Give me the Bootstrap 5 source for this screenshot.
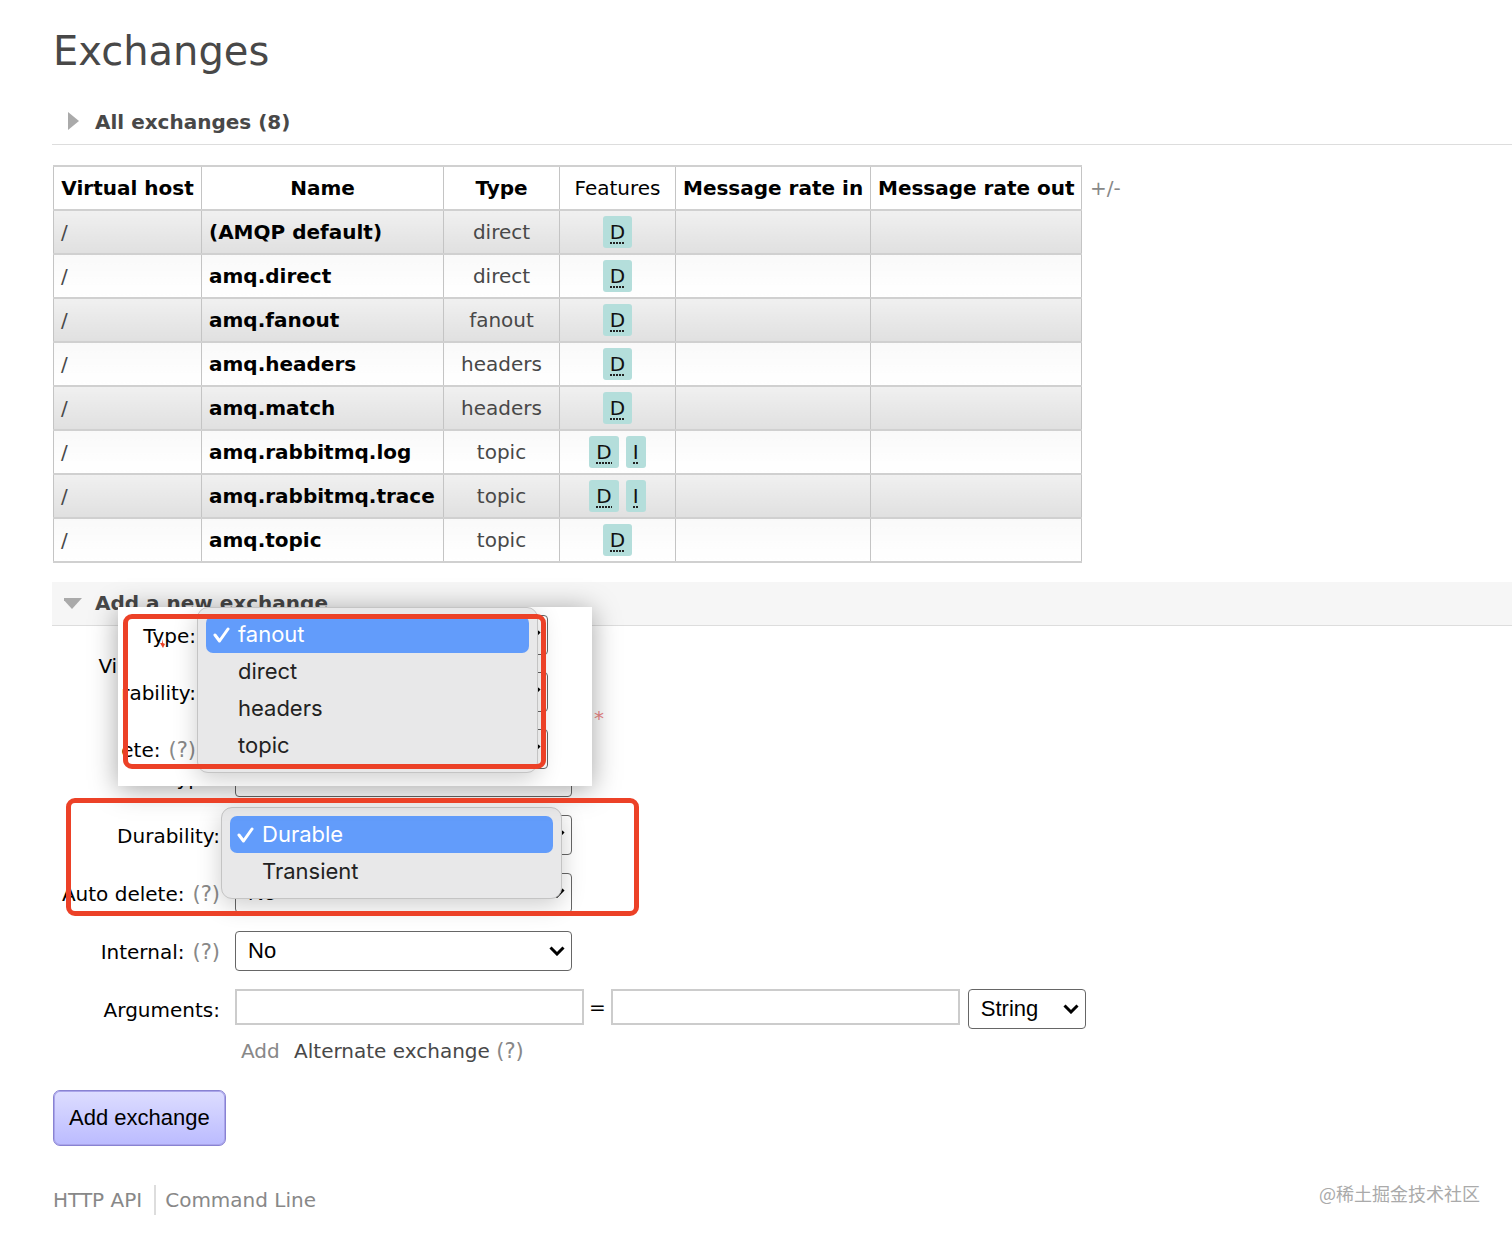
<!DOCTYPE html>
<html lang="en">
<head>
<meta charset="utf-8">
<meta name="viewport" content="width=device-width, initial-scale=1">
<title>Exchanges</title>
<link href="https://cdn.jsdelivr.net/npm/bootstrap@5.3.0/dist/css/bootstrap.min.css" rel="stylesheet">
<style>
  body { font: 20px/30px "DejaVu Sans", Verdana, sans-serif; color: #484848; background: #fff; }
  a, a:hover { color: #888; text-decoration: none; }
  .page { padding: 21px 0 16px 53px; }
  .page h1 { font-size: 40px; line-height: 60px; font-weight: 400; margin-bottom: 20px; }
  .section-head { font-size: 20px; line-height: 30px; font-weight: 700; padding: 6px 0 7px 12px; border-bottom: 1px solid #ddd; margin: 0 0 0 -1px; }
  .section-head.open { background: #f6f6f6; margin-top: 19px; }
  .section-head button { font: inherit; color: inherit; background: none; border: 0; padding: 0; }
  .section-head svg { width: 20px; height: 20px; fill: #aaa; margin-right: 11px; }

  .xtable { border-collapse: collapse; table-layout: fixed; width: 1028px; }
  .xtable th, .xtable td { height: 44px; border: 1px solid #c8c8c8; border-width: 2px 1px; border-color: #d0d0d0 #c4c4c4; padding: 0 7px; text-align: center; white-space: nowrap; line-height: 30px; }
  .xtable th { color: #000; }
  .xtable tbody tr:nth-child(odd) td { background: linear-gradient(#f0f0f0, #e0e0e0); }
  .xtable tbody tr:nth-child(even) td { background: linear-gradient(#f9f9f9, #fff); }
  .xtable td.start { text-align: left; }
  .xtable td a { color: #000; font-weight: 700; }
  .w-host { width: 148px; } .w-name { width: 242px; } .w-type { width: 116px; }
  .w-in { width: 195px; } .w-out { width: 211px; }
  .flag { display: inline-block; background: #b4dedb; color: #111; border-radius: 3px; padding: 1px 7px; line-height: 30px; }
  .flag + .flag { margin-left: 7px; }
  .flag abbr { display: block; text-decoration: none; background: repeating-linear-gradient(90deg, #222 0 2px, transparent 2px 3px) 0 25px / 100% 2px no-repeat; cursor: help; }

  .fields { padding-top: 19px; gap: 18px; }
  .fields label { color: #000; white-space: nowrap; }
  .lab { flex: 0 0 167px; min-width: 0; display: flex; justify-content: flex-end; gap: 8px; padding-top: 6px; }
  .fieldline { gap: 15px; }
  .hint { color: #888; font-size: 21px; }
  .pick { appearance: none; font: 22px/28px "Liberation Sans", Arial, sans-serif; color: #000; width: 337px; height: 40px; padding: 0 12px; border: 1px solid #666; border-radius: 4px;
    background: #fff url("data:image/svg+xml,%3Csvg xmlns='http://www.w3.org/2000/svg' width='16' height='10' viewBox='0 0 16 10'%3E%3Cpath d='M1.5 1.5 8 8l6.500-6.500' fill='none' stroke='%23000' stroke-width='3'/%3E%3C/svg%3E") no-repeat right 6px center; }
  .pick.short { width: 118px; }
  .entry { width: 349px; height: 36px; border: 2px solid #ccc; padding: 0 6px; background: #fff; }
  .equals { padding: 3px 5px 0; }
  .must { color: #ee8888; padding-left: 2px; }
  .extras { padding: 7px 0 0 6px; }

  .frame { position: absolute; border: 5px solid #ec4127; border-radius: 9px; pointer-events: none; z-index: 5; }
  .snippet { position: absolute; left: 65px; top: -19px; width: 474px; height: 179px; background: #fff; box-shadow: 0 3px 26px rgba(0,0,0,.36); z-index: 4; }
  .snippet .crop { position: absolute; inset: 0; overflow: hidden; padding-top: 8px; display: flex; flex-direction: column; gap: 17px; }
  .snippet .lab { flex-basis: 78px; }
  .snippet .menu { left: 79px; top: 0; }
  .snippet .frame { left: 5px; top: 7px; width: 423px; height: 155px; }
  .frame.lower { left: 13px; top: 172px; width: 573px; height: 118px; }
  .nick { position: absolute; left: 42px; top: 32px; width: 6px; height: 9px; fill: #ec4127; }
  .menu { position: absolute; width: 341px; padding: 8px; margin: 0; list-style: none; background: #e8e8e9; border: 1px solid #c4c4c4; border-radius: 11px; box-shadow: 0 6px 24px rgba(0,0,0,.2); z-index: 3; color: #222; font: 22px/37px Inter, sans-serif; }
  .menu li { height: 37px; padding-left: 32px; position: relative; }
  .menu li.on { background: #629cfb; color: #fff; border-radius: 7px; }
  .menu svg { position: absolute; left: 7px; top: 11px; width: 18px; height: 16px; fill: none; stroke: #fff; stroke-width: 3; stroke-linecap: round; stroke-linejoin: round; }
  .menu.lower { left: 168px; top: -8px; }

  .submit { font: 22px/32px "Liberation Sans", Arial, sans-serif; color: #000; padding: 11px 15px; border: 1px solid #8882d2; border-radius: 7px; background: linear-gradient(#ddddff, #bbbbff); box-shadow: inset 0 0 0 1px #aaa5ea; margin-top: 24px; }
  .foot { margin-top: 39px; padding-right: 32px; }
  .foot a { display: inline-block; }
  .foot a + a { border-left: 2px solid #ddd; margin-left: 12px; padding-left: 9px; }
  .credit { font: 18px/16px "Noto Sans CJK SC", sans-serif; color: #aaa; }
</style>
<script src="https://cdn.jsdelivr.net/npm/bootstrap@5.3.0/dist/js/bootstrap.bundle.min.js"></script>
</head>
<body>
<main class="page">
  <h1>Exchanges</h1>

  <h2 class="section-head"><button type="button" class="d-flex align-items-center"><svg viewBox="0 0 20 20"><path d="M4 0 15 9 4 18z"/></svg>All exchanges (8)</button></h2>

  <div class="d-flex align-items-start mt-1 pt-3">
    <table class="xtable flex-shrink-0">
      <colgroup><col class="w-host"><col class="w-name"><col class="w-type"><col class="w-type"><col class="w-in"><col class="w-out"></colgroup>
      <thead><tr><th>Virtual host</th><th>Name</th><th>Type</th><th class="fw-normal">Features</th><th>Message rate in</th><th>Message rate out</th></tr></thead>
      <tbody>
        <tr><td class="start">/</td><td class="start"><a href="#">(AMQP default)</a></td><td>direct</td><td><span class="flag"><abbr>D</abbr></span></td><td></td><td></td></tr>
        <tr><td class="start">/</td><td class="start"><a href="#">amq.direct</a></td><td>direct</td><td><span class="flag"><abbr>D</abbr></span></td><td></td><td></td></tr>
        <tr><td class="start">/</td><td class="start"><a href="#">amq.fanout</a></td><td>fanout</td><td><span class="flag"><abbr>D</abbr></span></td><td></td><td></td></tr>
        <tr><td class="start">/</td><td class="start"><a href="#">amq.headers</a></td><td>headers</td><td><span class="flag"><abbr>D</abbr></span></td><td></td><td></td></tr>
        <tr><td class="start">/</td><td class="start"><a href="#">amq.match</a></td><td>headers</td><td><span class="flag"><abbr>D</abbr></span></td><td></td><td></td></tr>
        <tr><td class="start">/</td><td class="start"><a href="#">amq.rabbitmq.log</a></td><td>topic</td><td><span class="flag"><abbr>D</abbr></span><span class="flag"><abbr>I</abbr></span></td><td></td><td></td></tr>
        <tr><td class="start">/</td><td class="start"><a href="#">amq.rabbitmq.trace</a></td><td>topic</td><td><span class="flag"><abbr>D</abbr></span><span class="flag"><abbr>I</abbr></span></td><td></td><td></td></tr>
        <tr><td class="start">/</td><td class="start"><a href="#">amq.topic</a></td><td>topic</td><td><span class="flag"><abbr>D</abbr></span></td><td></td><td></td></tr>
      </tbody>
    </table>
    <a href="#" class="pt-2 ms-2">+/-</a>
  </div>

  <h2 class="section-head open"><button type="button" class="d-flex align-items-center"><svg viewBox="0 0 20 20"><path d="M-2 5h20l-10 11z"/></svg>Add a new exchange</button></h2>

  <form>
    <div class="fields d-flex flex-column position-relative">
      <div class="fieldline d-flex"><label class="lab" for="vhost">Virtual host:</label><select id="vhost" class="pick"><option>/</option></select></div>
      <div class="fieldline d-flex"><label class="lab" for="name">Name:</label><div class="d-flex gap-2"><input id="name" class="entry" type="text"><span class="must">*</span></div></div>
      <div class="fieldline d-flex"><label class="lab" for="type">Type:</label><select id="type" class="pick"><option>fanout</option></select></div>
      <div class="fieldline d-flex position-relative"><label class="lab" for="durable">Durability:</label><select id="durable" class="pick"><option>Durable</option><option>Transient</option></select>
        <ul class="menu lower">
          <li class="on"><svg viewBox="0 0 18 16"><path d="m2 8 4.500 6L15 2"/></svg>Durable</li>
          <li>Transient</li>
        </ul>
      </div>
      <div class="fieldline d-flex"><label class="lab" for="autodel">Auto delete: <span class="hint">(?)</span></label><select id="autodel" class="pick"><option>No</option></select></div>
      <div class="fieldline d-flex"><label class="lab" for="internal">Internal: <span class="hint">(?)</span></label><select id="internal" class="pick"><option>No</option></select></div>
      <div class="fieldline d-flex"><label class="lab" for="argkey">Arguments:</label>
        <div>
          <div class="d-flex"><input id="argkey" class="entry" type="text"><label class="equals" for="argval">=</label><input id="argval" class="entry" type="text"><select class="pick short ms-2" aria-label="Argument type"><option>String</option></select></div>
          <div class="extras"><a href="#">Add</a> <span class="ms-2">Alternate exchange</span> <span class="hint">(?)</span></div>
        </div>
      </div>

      <div class="snippet">
        <div class="crop">
          <div class="fieldline d-flex"><label class="lab" for="s-type">Type:</label><select id="s-type" class="pick flex-shrink-0"><option>fanout</option></select></div>
          <div class="fieldline d-flex"><label class="lab" for="s-dur">rability:</label><select id="s-dur" class="pick flex-shrink-0"><option>Durable</option></select></div>
          <div class="fieldline d-flex"><label class="lab" for="s-auto">ete: <span class="hint">(?)</span></label><select id="s-auto" class="pick flex-shrink-0"><option>No</option></select></div>
          <ul class="menu">
            <li class="on"><svg viewBox="0 0 18 16"><path d="m2 8 4.500 6L15 2"/></svg>fanout</li>
            <li>direct</li>
            <li>headers</li>
            <li>topic</li>
          </ul>
        </div>
        <div class="frame"></div>
        <svg class="nick" viewBox="0 0 6 9"><path d="M2 0 3 4 5 5 3 9 0 4h2z"/></svg>
      </div>
      <div class="frame lower"></div>
    </div>
    <button type="submit" class="submit">Add exchange</button>
  </form>

  <footer class="foot d-flex justify-content-between align-items-start">
    <nav aria-label="Footer"><a href="#">HTTP API</a><a href="#">Command Line</a></nav>
    <span class="credit">@稀土掘金技术社区</span>
  </footer>
</main>
</body>
</html>
